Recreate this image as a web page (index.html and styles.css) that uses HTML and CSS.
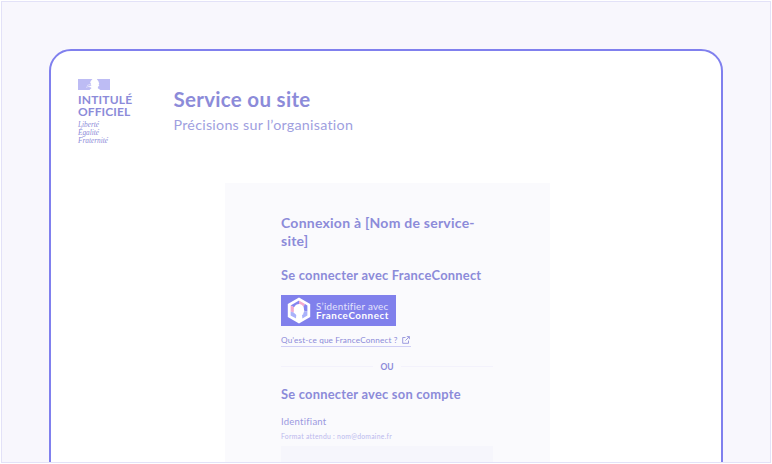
FILE: index.html
```html
<!DOCTYPE html>
<html lang="fr">
<head>
<meta charset="utf-8">
<title>Connexion</title>
<link rel="stylesheet" href="styles.css">
</head>
<body>
<div class="frame">
  <main class="page">
    <header class="header">
      <div class="brand">
        <svg class="flag" width="32" height="11" viewBox="0 0 32 11" aria-hidden="true">
          <path fill="#bdbcf4" d="M0 0H14.5L13.2 1.6L12 3.4L13 4L12.6 5.6L13.6 6.2L10 8L12.4 8.2L13.6 9L11.5 11H0Z"/>
          <path fill="#bdbcf4" d="M18.8 0H32V11H22.4L19.8 9.2L20 7.6L21.4 7L20.6 5.7L21.2 4.8L20.5 2.5Z"/>
          <path fill="none" stroke="#e9e8fc" stroke-width=".7" d="M9 6.6L12.6 5M8 8.4L12 7"/>
        </svg>
        <div class="brand-name"><span class="brand-a">INTITULÉ</span><span class="brand-b">OFFICIEL</span></div>
        <div class="motto">Liberté<br>Égalité<br>Fraternité</div>
      </div>
      <div class="service">
        <div class="service-name">Service ou site</div>
        <div class="service-tagline">Précisions sur l’organisation</div>
      </div>
    </header>
    <section class="login">
      <h1 class="title">Connexion à [Nom de service-<br>site]</h1>
      <h2 class="subtitle subtitle-fc">Se connecter avec FranceConnect</h2>
      <div class="fc-button">
        <svg width="24" height="27" viewBox="0 0 24 27" aria-hidden="true">
          <path fill="#fff" d="M12 .5L23.2 7V20L12 26.5L.8 20V7Z"/>
          <path fill="#8585f0" d="M12 3.6L3.6 8.5L7.5 10.5L12 7.5Z"/>
          <path fill="#f3a9cf" d="M3.6 8.5V14.5L6.6 15.6L7.5 10.5Z"/>
          <path fill="#a9b2fa" d="M3.6 14.5V18.4L9.2 21.6L9.6 18.2L6.6 15.6Z"/>
          <path fill="#f3a9cf" d="M12 3.6L18 7.1L16.6 9.6L12 7.5Z"/>
          <path fill="#8585f0" d="M18 7.1L20.4 8.5V14L17 14.5L16.6 9.6Z"/>
          <path fill="#a9b2fa" d="M20.4 14V18.5L15.4 21.5L15 18L17 14.5Z"/>
          <path fill="#fff" d="M7 10.4Q8.6 7 12.5 7Q16 7.6 16.4 11L17.4 14L16.6 14.6L16.2 17.4L14.4 18V21L12 23.3L9 21.6L9.6 17.6Q6 15 7 10.4Z"/>
        </svg>
        <div class="fc-label"><span class="fc-a">S’identifier avec</span><strong class="fc-b">FranceConnect</strong></div>
      </div>
      <div class="fc-link"><span>Qu’est-ce que FranceConnect ?</span>
        <svg width="8" height="8" viewBox="0 0 8 8" fill="none" stroke="currentColor" stroke-width=".85" aria-hidden="true"><path d="M3.5 1.5H.7V7.3H6.5V4.5M4.8.6H7.4V3.2M7.3.7L3.4 4.6"/></svg>
      </div>
      <div class="divider"><span>OU</span></div>
      <h2 class="subtitle subtitle-account">Se connecter avec son compte</h2>
      <div class="label">Identifiant</div>
      <div class="hint">Format attendu : nom@domaine.fr</div>
      <div class="field"></div>
    </section>
  </main>
</div>
</body>
</html>
```
FILE: styles.css
```css
* { box-sizing: border-box; }
body {
  margin: 0;
  height: 464px;
  padding: 1px;
  overflow: hidden;
  background: #fff;
  font-family: Lato, "Noto Sans", sans-serif;
  color: #8c8bd9;
}
h1, h2 { margin: 0; }
.frame {
  height: 462px;
  padding: 47px 47px 0;
  overflow: hidden;
  border: 1px solid #e3e2f8;
  background: #f8f7fd;
}
.page {
  height: 440px;
  padding: 28px 27px 0;
  border: 2px solid #8080ee;
  border-radius: 22px;
  background: #fff;
  white-space: nowrap;
}
.header { display: flex; height: 104px; }
.brand { width: 95.5px; }
.flag { display: block; }
.brand-name {
  display: flex;
  flex-direction: column;
  margin-top: 4px;
  font-size: 12px;
  line-height: 12px;
  font-weight: 700;
}
.brand-a { letter-spacing: .2px; }
.brand-b { letter-spacing: .1px; }
.motto {
  margin-top: 3px;
  font: italic 7.3px/8px "Liberation Serif", serif;
}
.service-name {
  margin-top: 8px;
  font-size: 20.5px;
  line-height: 25px;
  font-weight: 700;
  letter-spacing: .3px;
}
.service-tagline {
  margin-top: 3px;
  font-size: 14.3px;
  line-height: 20px;
  letter-spacing: .25px;
  color: #a09fe0;
}
.login {
  width: 325px;
  height: 340px;
  margin-left: 147px;
  padding: 31px 56px 0;
  background: #fafafd;
}
.title { font-size: 14px; line-height: 18px; letter-spacing: .24px; }
.subtitle { font-size: 12.9px; line-height: 16px; letter-spacing: .23px; }
.subtitle-fc { margin-top: 17px; }
.fc-button {
  display: flex;
  align-items: center;
  gap: 5px;
  width: 115px;
  height: 31px;
  margin-top: 12.4px;
  padding-left: 6px;
  background: #8080ec;
  color: #fff;
}
.fc-label {
  display: flex;
  flex-direction: column;
  font-size: 9.8px;
  line-height: 9px;
}
.fc-a { letter-spacing: .26px; color: #e4e4fc; }
.fc-b { letter-spacing: .55px; }
.fc-link {
  display: flex;
  align-items: center;
  justify-content: space-between;
  width: 130px;
  height: 14px;
  margin-top: 7.1px;
  border-bottom: 1px solid #d0cff5;
  font-size: 8.2px;
  letter-spacing: .15px;
}
.fc-link svg { margin-right: 1px; }
.divider {
  display: flex;
  align-items: center;
  gap: 7px;
  width: 212px;
  height: 12px;
  margin-top: 13.5px;
  font-size: 8.5px;
  font-weight: 700;
}
.divider::before, .divider::after {
  content: "";
  flex: 1;
  height: 1px;
  background: #f3f2fc;
}
.subtitle-account { margin-top: 13px; }
.label {
  margin-top: 14px;
  font-size: 9.5px;
  line-height: 12px;
  letter-spacing: .25px;
  color: #9a99df;
}
.hint {
  margin-top: 4px;
  font-size: 6.8px;
  line-height: 9px;
  letter-spacing: .28px;
  color: #bab9ed;
}
.field { width: 212px; height: 30px; margin-top: 5px; background: #f6f6fc; }
```
